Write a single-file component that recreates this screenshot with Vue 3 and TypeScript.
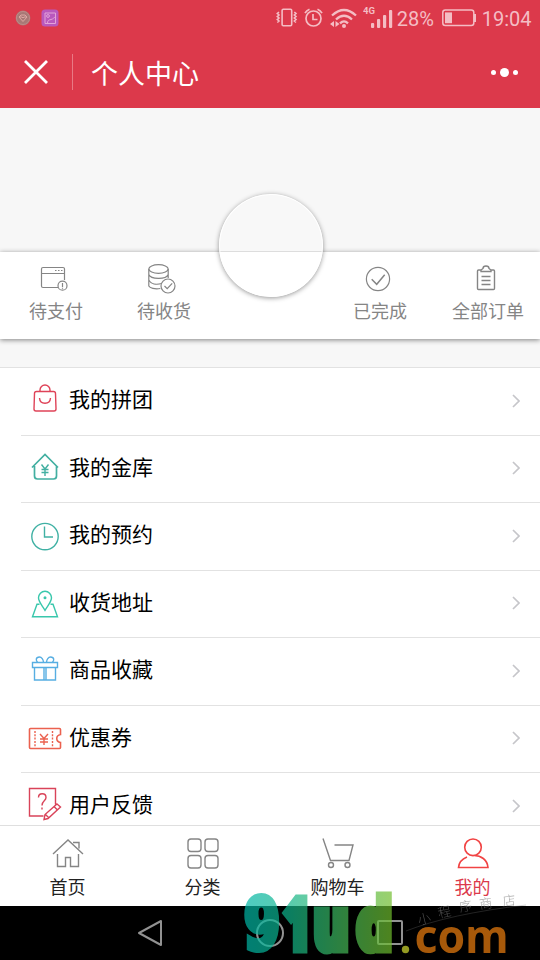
<script setup lang="ts">
interface Item { id: string; label: string }

const orders: Item[] = [
  { id: 'pay', label: '待支付' },
  { id: 'receive', label: '待收货' },
  { id: 'gap', label: '' },
  { id: 'done', label: '已完成' },
  { id: 'all', label: '全部订单' },
]

const menu: Item[] = [
  { id: 'bag', label: '我的拼团' },
  { id: 'vault', label: '我的金库' },
  { id: 'clock', label: '我的预约' },
  { id: 'address', label: '收货地址' },
  { id: 'gift', label: '商品收藏' },
  { id: 'coupon', label: '优惠券' },
  { id: 'feedback', label: '用户反馈' },
]

const tabs: Item[] = [
  { id: 'home', label: '首页' },
  { id: 'category', label: '分类' },
  { id: 'cart', label: '购物车' },
  { id: 'mine', label: '我的' },
]
</script>

<template>
  <div class="screen">
    <header class="header">
      <div class="status">
        <div class="status-left">
          <svg width="16" height="16" viewBox="0 0 16 16" fill="none">
            <circle cx="8" cy="8" r="7.4" fill="#a87976" />
            <circle cx="8" cy="8" r="6.5" stroke="#bd8c88" />
            <path d="M4 7l2-2h4l2 2-4 4.5zM4 7h3l1 1 1-1h3" stroke="#dda7a2" />
          </svg>
          <svg width="18" height="18" viewBox="0 0 18 18" fill="none">
            <rect x=".5" y=".5" width="17" height="17" rx="3.5" fill="#b958bd" />
            <path d="M4 4h10.500v10.500H4zM6.500 14.500c0-3 1-3.500 3.500-4s2.500-2 4.500-2.500" stroke="#e3a3d9" />
            <circle cx="7" cy="7" r="1.400" stroke="#e3a3d9" />
          </svg>
        </div>
        <div class="status-right">
          <svg class="vibrate" width="22" height="20" viewBox="0 0 22 20" fill="none" stroke="currentColor" stroke-width="1.600">
            <rect x="6.100" y="1.300" width="9.600" height="16.400" rx="1.200" />
            <path d="M3 4L1.300 5.500 3 7 1.300 8.500 3 10 1.300 11.500 3 13 1.300 14.500M18.300 4L20 5.500 18.300 7 20 8.500 18.300 10 20 11.500 18.300 13 20 14.500" />
          </svg>
          <svg class="alarm" width="19" height="20" viewBox="0 0 19 20" fill="none" stroke="currentColor" stroke-width="1.700">
            <circle cx="9.500" cy="10.500" r="7.500" />
            <path d="M9 6v5.500h4.500M1 5.200C2 3.400 3.300 2.200 5.500 1.300M18 5.200C17 3.400 15.700 2.200 13.500 1.300" />
          </svg>
          <svg class="wifi" width="28" height="21" viewBox="0 0 28 21" fill="none" stroke="currentColor" stroke-width="2.300">
            <path d="M3 7.500Q15 -3.500 27 7.500M7 11.500Q15 4 23 11.500M11 15.300Q15 11.500 19 15.300" />
            <circle cx="15" cy="18" r="2" fill="currentColor" stroke="none" />
            <path d="M5 13v6l-4-3zM6.500 13v6l4-3z" fill="currentColor" stroke="none" />
          </svg>
          <svg class="signal" width="31" height="25" viewBox="0 0 31 25" fill="currentColor">
            <text x="0" y="9" class="network">4G</text>
            <rect x="8" y="18" width="3.200" height="5" rx="1" />
            <rect x="14" y="14" width="3.200" height="9" rx="1" />
            <rect x="20" y="10" width="3.200" height="13" rx="1" />
            <rect x="26" y="5" width="3.200" height="18" rx="1" />
          </svg>
          <span class="percent">28%</span>
          <svg class="battery" width="34" height="18" viewBox="0 0 34 18" fill="none">
            <rect x=".8" y="1" width="31" height="15.500" rx="2.500" stroke="currentColor" stroke-width="1.500" />
            <rect x="3" y="3.400" width="7" height="10.800" fill="currentColor" />
            <rect x="32" y="5" width="2" height="8" fill="currentColor" />
          </svg>
          <span class="time">19:04</span>
        </div>
      </div>
      <div class="titlebar">
        <svg width="24" height="24" viewBox="0 0 24 24" stroke="#fff" stroke-width="2.800">
          <path d="M1 1L23 23M23 1L1 23" />
        </svg>
        <i class="divider"></i>
        <h1>个人中心</h1>
        <div class="more"><i></i><i class="mid"></i><i></i></div>
      </div>
    </header>

    <main class="body">
      <section class="profile">
        <div class="orders">
          <div v-for="o in orders" :key="o.id" class="order">
            <svg v-if="o.id !== 'gap'" width="32" height="32" viewBox="0 0 32 32" fill="none" stroke="#858585" stroke-width="1.200">
              <g v-if="o.id === 'pay'">
                <path d="M20 25.500H5a1.500 1.500 0 0 1-1.500-1.500V7A1.500 1.500 0 0 1 5 5.500h20A1.500 1.500 0 0 1 26.500 7v11M3.500 11.500h23" />
                <path d="M17 8.500h1.500M20 8.500h1.500M23 8.500h1.500" />
                <circle cx="24.500" cy="23.700" r="4.500" />
                <path d="M24.500 21v4M24.500 25.700v1" />
              </g>
              <g v-else-if="o.id === 'receive'">
                <ellipse cx="12.500" cy="7" rx="9.700" ry="4.300" />
                <path d="M2.800 7v17c1 2 6 3.500 11.500 2.500M22.200 7v9M2.800 12.500c2 5 17 5.500 19.400 0M2.800 18c2 4 7.500 5 13 3.500" />
                <circle cx="22" cy="24" r="7" />
                <path d="M18.500 24l2.700 2.700 5-5.300" />
              </g>
              <g v-else-if="o.id === 'done'">
                <circle cx="16" cy="17" r="11.600" />
                <path d="M9.700 17.300l5 5 8-9.500" stroke-width="1.500" />
              </g>
              <g v-else>
                <path d="M11 8H8.500a1 1 0 0 0-1 1v17.500a1 1 0 0 0 1 1h15a1 1 0 0 0 1-1V9a1 1 0 0 0-1-1H21l-2-1.500c0-3.300-6-3.300-6 0L11 8v1.500h10V8M11.500 14.500h9M11.500 18.500h9M11.500 22.500h9" stroke-width="1.400" />
              </g>
            </svg>
            <span>{{ o.label }}</span>
          </div>
        </div>
        <div class="avatar"></div>
      </section>

      <section class="menu">
        <div v-for="m in menu" :key="m.id" class="row">
          <svg class="row-icon" width="34" height="34" viewBox="0 0 34 34" fill="none" stroke-width="1.400">
            <g v-if="m.id === 'bag'" stroke="#df4358">
              <path d="M8.500 9.500h17a2 2 0 0 1 2 2l.5 15.500a2 2 0 0 1-2 2H8a2 2 0 0 1-2-2l.5-15.500a2 2 0 0 1 2-2zM12 9.500V8a5 5 0 0 1 10 0v1.500M11.500 16c.5 7 10.500 7 11 0" />
            </g>
            <g v-else-if="m.id === 'vault'" stroke="#42afa1" transform="translate(0 -1)">
              <path d="M4 18.500L17 5.500 30 18.500M6.500 17v10a3 3 0 0 0 3 3h16a3 3 0 0 0 3-3V17" stroke-width="1.700" />
              <path d="M13.500 15.500L17 20l3.500-4.500M17 20v7M13.500 20.500h7M13.500 23.500h7" />
            </g>
            <g v-else-if="m.id === 'clock'" stroke="#40b1a4">
              <circle cx="17" cy="19.600" r="13.200" />
              <path d="M16.500 9.500v10.500H25" />
            </g>
            <g v-else-if="m.id === 'address'" stroke="#39c7ac" transform="translate(0 1.300)">
              <path d="M17 24c-3-5-6.500-8.500-6.500-12.500a6.500 6.500 0 0 1 13 0C23.500 15.500 20 19 17 24zM11.500 18H9L4.500 30.500h25L25 18h-2.500" />
              <circle cx="17" cy="11.500" r=".8" fill="#39c7ac" />
            </g>
            <g v-else-if="m.id === 'gift'" stroke="#57aee2">
              <path d="M4.500 10.500h25v5h-25zM6.500 15.500V28h21V15.500M16 15.500V28M18 15.500V28M15.500 10.500c0-3-2-5.500-4-5.500-4 0-4 4-1.500 5.500M18.500 10.500c0-3 2-5.500 4-5.500 4 0 4 4 1.500 5.500" />
            </g>
            <g v-else-if="m.id === 'coupon'" stroke="#eb614f" transform="translate(0 .5)">
              <path d="M2.500 8h29a1 1 0 0 1 1 1v5c-5 1-5 7 0 8v5a1 1 0 0 1-1 1h-29a1 1 0 0 1-1-1V9a1 1 0 0 1 1-1z" stroke-width="1.600" />
              <path d="M7 10.500v16.500M24.500 10.500v16.500" stroke-dasharray="2 1.300" />
              <path d="M12 13.500l4 4.500 4-4.500M16 18v6.500M12 18.500h8M12 21.500h8" />
            </g>
            <g v-else stroke="#d94359">
              <path d="M27.500 17.500V1.500h-26v27.500h14M29 17l3.500 3-12.500 11.500-4 1 1-5zM17 27l4 4M26 19.500l3.500 3.500" />
              <path d="M10.500 10.500c0-5 7.500-5 7.500 0 0 3.500-4 3-4 8M14 20.500v2" />
            </g>
          </svg>
          <div class="row-main">
            <span>{{ m.label }}</span>
            <svg width="8" height="14" viewBox="0 0 8 14" fill="none" stroke="#c6c6ca" stroke-width="1.700"><path d="M1 1l6 6-6 6" /></svg>
          </div>
        </div>
      </section>
    </main>

    <nav class="tabs">
      <div v-for="t in tabs" :key="t.id" class="tab" :class="{ active: t.id === 'mine' }">
        <svg width="34" height="34" viewBox="0 0 34 34" fill="none" stroke="#858585" stroke-width="1.400">
          <path v-if="t.id === 'home'" d="M2 17L17 3l15 14M6.500 17v12.500h8v-9h5v9h8V17M22 5.500h6v6" />
          <g v-else-if="t.id === 'category'">
            <rect x="2" y="2" width="13" height="12.500" rx="3" />
            <rect x="19" y="2" width="13" height="12.500" rx="3" />
            <rect x="2" y="18.500" width="13" height="12.500" rx="3" />
            <rect x="19" y="18.500" width="13" height="12.500" rx="3" />
          </g>
          <g v-else-if="t.id === 'cart'">
            <path d="M2 1.500l7.500 22H28L32 8H13.500" />
            <circle cx="10" cy="28" r="2.500" /><circle cx="26.500" cy="28" r="2.500" />
          </g>
          <path v-else d="M17 2a8.300 8.300 0 1 1 0 16.600A8.300 8.300 0 0 1 17 2M11 20c-5 2-8 5-8.500 10.500h29.500C31.500 23 25 18 17 18.500" stroke="#f14343" stroke-width="1.600" />
        </svg>
        <span>{{ t.label }}</span>
      </div>
    </nav>

    <footer class="system">
      <svg class="back" width="26" height="30" viewBox="0 0 26 30" fill="none" stroke="#929292" stroke-width="2" stroke-linejoin="round"><path d="M24 3v24L2 15z" /></svg>
      <svg width="30" height="30" viewBox="0 0 30 30" fill="none" stroke="#929292" stroke-width="2"><circle cx="14" cy="15" r="13" /></svg>
      <svg class="recent" width="26" height="26" viewBox="0 0 26 26" fill="none" stroke="#929292" stroke-width="2"><rect x="1" y="1" width="24" height="23" rx="1" /></svg>
    </footer>

    <svg class="watermark" width="300" height="80" viewBox="240 880 300 80">
      <defs>
        <linearGradient id="brand" gradientUnits="userSpaceOnUse" x1="304" y1="0" x2="491" y2="0">
          <stop offset="0" stop-color="#00b7a8" />
          <stop offset=".3" stop-color="#10b58c" />
          <stop offset="1" stop-color="#72bd2c" />
        </linearGradient>
      </defs>
      <g opacity=".7">
        <g class="brand" transform="scale(.8 1)" fill="url(#brand)" stroke="url(#brand)">
          <text y="949"><tspan x="305" class="nine">9</tspan><tspan x="355" class="one">1</tspan><tspan x="392">u</tspan><tspan x="446">d</tspan></text>
        </g>
        <circle cx="405.500" cy="949.500" r="3.700" fill="#d5df32" />
        <text class="domain" x="414.500" y="952.500" textLength="94" lengthAdjust="spacingAndGlyphs">com</text>
      </g>
      <path d="M406 931Q449 914 526 905" fill="none" stroke="#777" stroke-width=".6" opacity=".5" />
      <text class="slogan" x="419 439 460 480 503" y="925 918 912 909 906" rotate="-14 -12 -10 -8 -6">小程序商店</text>
    </svg>
  </div>
</template>

<style>
body { margin: 0; overflow: hidden; }
</style>

<style scoped>
.screen { position: relative; width: 540px; height: 960px; overflow: hidden; display: flex; flex-direction: column; background: #f7f7f7; font-family: Roboto, "Noto Sans CJK SC", sans-serif; }
.header { height: 108px; flex: none; background: #dc394b; color: #fff; }
.status { height: 36px; display: flex; justify-content: space-between; color: #f4bdc4; }
.status-left { display: flex; gap: 10px; align-items: center; padding-left: 14.500px; }
.status-right { display: flex; align-items: center; padding-right: 8.500px; font-size: 20px; }
.status-right span { padding-top: 2px; }
.alarm { margin-left: 6px; }
.wifi { margin-left: 6px; }
.signal { margin-left: 6px; margin-top: -1px; }
.network { font: 700 9.500px Roboto, sans-serif; }
.percent { margin-left: 3px; width: 39px; }
.battery { margin-left: 6px; }
.time { margin-left: 6px; }
.titlebar { height: 72px; display: flex; align-items: center; padding-left: 24px; }
.divider { width: 1px; height: 36px; margin: 0 18px 0 24px; background: #e97985; }
h1 { margin: 0; padding-top: 5px; font-size: 27px; line-height: 40px; font-weight: 400; }
.more { margin: 0 22px 0 auto; display: flex; align-items: center; gap: 4px; }
.more i { width: 5px; height: 5px; border-radius: 50%; background: #fff; }
.more .mid { width: 9px; height: 9px; }
.body { flex: 1; min-height: 0; overflow: hidden; }
.profile { position: relative; height: 231px; padding-top: 144px; box-sizing: border-box; }
.orders { height: 87px; display: flex; background: #fff; box-shadow: 0 1px 5px rgba(0, 0, 0, .48); }
.order { width: 108px; display: flex; flex-direction: column; align-items: center; padding-top: 10px; box-sizing: border-box; color: #858585; font-size: 18px; }
.order span { margin-left: 4px; line-height: 26px; margin-top: 5px; white-space: nowrap; }
.avatar { position: absolute; left: 219px; top: 86px; width: 104px; height: 103px; box-sizing: border-box; border: 1.500px solid #fff; border-radius: 50%; background: linear-gradient(#f8f8f8 0 56px, #ddd 56px 57px, #fff 57px); box-shadow: 0 1px 5px rgba(0, 0, 0, .42); }
.menu { margin-top: 28px; border-top: 1px solid #e2e2e2; background: #fff; }
.row { height: 67.500px; display: flex; padding-left: 21px; position: relative; }
.row-icon { margin: 14px 7px 0 7px; flex: none; }
.row-main { flex: 1; display: flex; justify-content: space-between; align-items: center; padding: 0 20.500px 7px 0; font-size: 21px; color: #000; }
.row-main svg { margin-top: 5px; }
.row::after { content: ""; position: absolute; left: 21px; right: 0; bottom: 0; height: 1px; background: #e2e2e2; }
.tabs { flex: none; height: 81px; box-sizing: border-box; border-top: 1px solid #dfdfdf; background: #fff; display: flex; }
.tab { flex: 1; display: flex; flex-direction: column; align-items: center; padding-top: 11px; font-size: 18px; color: #222; }
.tab span { margin-top: 4px; line-height: 26px; }
.tab.active { color: #dc394b; }
.system { flex: none; height: 54px; background: #000; display: flex; align-items: center; padding-left: 137px; gap: 93px; }
.recent { margin-left: -2px; }
.watermark { position: absolute; left: 240px; top: 880px; }
.brand { font: 700 69px "DejaVu Sans Condensed", "DejaVu Sans", sans-serif; font-stretch: condensed; stroke-width: 9px; stroke-linejoin: miter; stroke-miterlimit: 2; }
.nine { font-size: 72px; stroke-width: 6px; }
.one { font-family: "Open Sans", sans-serif; }
.domain { font: 700 46px "Noto Sans", sans-serif; fill: #ef800f; }
.slogan { font: 300 13px "Noto Sans CJK SC", sans-serif; fill: #777; opacity: .65; }
</style>
